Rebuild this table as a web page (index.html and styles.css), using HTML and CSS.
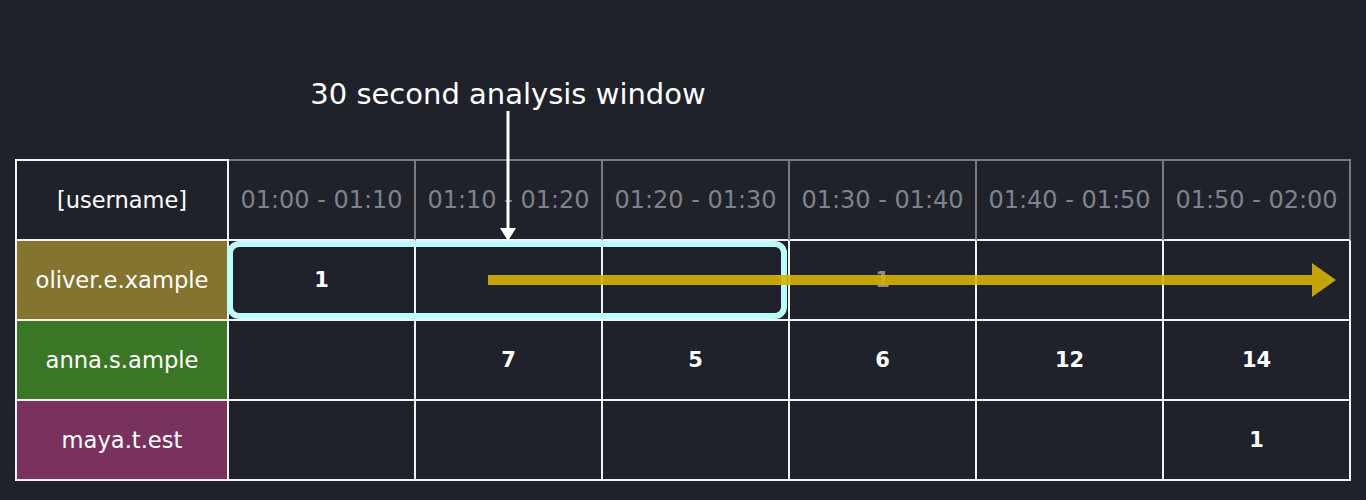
FILE: index.html
```html
<!DOCTYPE html>
<html lang="en">
<head>
<meta charset="utf-8">
<title>30 second analysis window</title>
<link rel="stylesheet" href="styles.css">
</head>
<body>
<div class="page">
  <div class="title">30 second analysis window</div>
  <div class="board">
    <div class="cell head label-head">[username]</div>
    <div class="cell head time">01:00 - 01:10</div>
    <div class="cell head time">01:10 - 01:20</div>
    <div class="cell head time">01:20 - 01:30</div>
    <div class="cell head time">01:30 - 01:40</div>
    <div class="cell head time">01:40 - 01:50</div>
    <div class="cell head time">01:50 - 02:00</div>

    <div class="cell user olive">oliver.e.xample</div>
    <div class="cell num">1</div>
    <div class="cell num"></div>
    <div class="cell num"></div>
    <div class="cell num dim">1</div>
    <div class="cell num"></div>
    <div class="cell num"></div>

    <div class="cell user green">anna.s.ample</div>
    <div class="cell num"></div>
    <div class="cell num">7</div>
    <div class="cell num">5</div>
    <div class="cell num">6</div>
    <div class="cell num">12</div>
    <div class="cell num">14</div>

    <div class="cell user plum">maya.t.est</div>
    <div class="cell num"></div>
    <div class="cell num"></div>
    <div class="cell num"></div>
    <div class="cell num"></div>
    <div class="cell num"></div>
    <div class="cell num">1</div>
  </div>

  <svg class="overlay" width="1366" height="500" viewBox="0 0 1366 500" aria-hidden="true">
    <rect class="window" x="230" y="244" width="554" height="72" rx="9" ry="9"/>
    <g class="flow">
      <rect x="488" y="275" width="826" height="10"/>
      <polygon points="1312,263 1336,280 1312,297"/>
    </g>
    <line class="pointer" x1="508" y1="111" x2="508" y2="230"/>
    <polygon class="pointer-head" points="500,228 516,228 508,241"/>
  </svg>
</div>
</body>
</html>
```

FILE: styles.css
```css
html, body {
  margin: 0;
  padding: 0;
  background: #1f222b;
}

body {
  font-family: "DejaVu Sans", Verdana, sans-serif;
  color: #ffffff;
}

.page {
  position: relative;
  width: 1366px;
  height: 500px;
  overflow: hidden;
}

.title {
  width: 1016px;
  margin-top: 76px;
  height: 36px;
  line-height: 36px;
  font-size: 29px;
  text-align: center;
  color: #ffffff;
}

.board {
  margin-top: 47px;
  margin-left: 15px;
  display: grid;
  grid-template-columns: 214px repeat(6, 187px);
  grid-template-rows: 82px repeat(3, 80px);
  width: max-content;
}

.cell {
  box-sizing: border-box;
  display: flex;
  align-items: center;
  justify-content: center;
  border-right: 2px solid #f2f2f2;
  border-bottom: 2px solid #f2f2f2;
  white-space: nowrap;
}

.head {
  border-top: 2px solid #7b7b7e;
}

.label-head {
  border-top-color: #f2f2f2;
  border-left: 2px solid #f2f2f2;
  font-size: 22.5px;
  color: #ffffff;
}

.time {
  border-right-color: #7b7b7e;
  font-size: 24px;
  color: #7f8289;
}

.user {
  border-left: 2px solid #f2f2f2;
  font-size: 22.6px;
  color: #ffffff;
}

.olive { background: #857330; }
.green { background: #3b7526; }
.plum  { background: #79325e; }

.num {
  font-size: 21px;
  font-weight: bold;
  color: #ffffff;
}

.num.dim {
  color: #8a8c90;
}

.overlay {
  position: absolute;
  left: 0;
  top: 0;
  pointer-events: none;
}

.window {
  fill: none;
  stroke: #b9fdff;
  stroke-width: 6;
}

.flow {
  fill: #d6b303;
  opacity: 0.9;
}

.pointer {
  stroke: #ffffff;
  stroke-width: 3;
}

.pointer-head {
  fill: #ffffff;
}
```
